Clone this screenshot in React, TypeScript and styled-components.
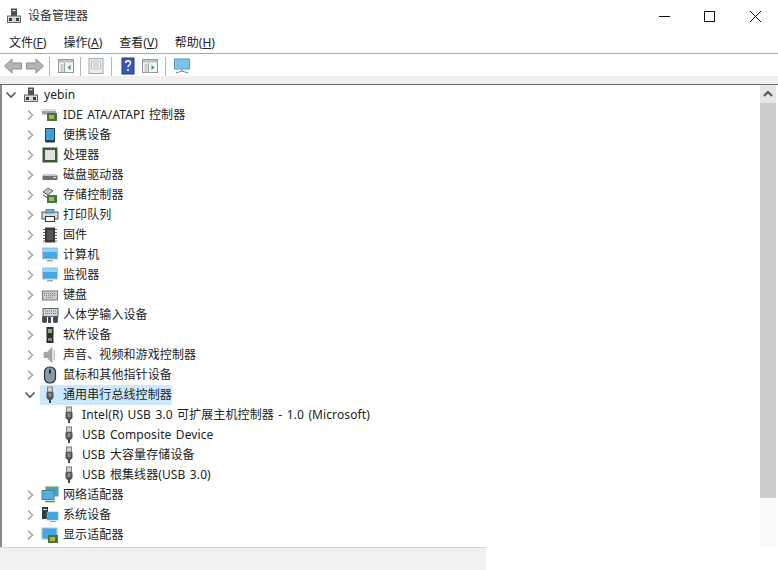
import React from 'react';
import styled, { createGlobalStyle } from 'styled-components';

const Global = createGlobalStyle`
  html, body { margin: 0; padding: 0; background: #fff; }
  body { font-family: "Noto Sans", "Noto Sans CJK SC", sans-serif; font-size: 12px; color: #222; overflow: hidden; }
`;

const Window = styled.div`
  width: 778px;
  height: 570px;
  display: flex;
  flex-direction: column;
  overflow: hidden;
  background: #fff;
`;
const TitleBar = styled.div`
  height: 32px;
  display: flex;
  align-items: center;
  padding-left: 5px;
  flex: none;
`;
const TitleIcon = styled.div`
  width: 18px;
  height: 18px;
  margin-right: 5px;
`;
const TitleText = styled.span`
  flex: 1;
  font-size: 12px;
  color: #333;
  margin-bottom: 2px;
`;
const WinButton = styled.div`
  width: 45.5px;
  height: 28px;
  display: flex;
  align-items: center;
  justify-content: center;
`;
const MenuBar = styled.div`
  height: 21px;
  display: flex;
  align-items: center;
  gap: 17px;
  padding-left: 9px;
  border-bottom: 1px solid #a8a8a8;
  flex: none;
`;
const MenuItem = styled.span`
  font-size: 12px;
  color: #222;
  margin-bottom: 2px;
  u { text-underline-offset: 1px; }
`;
const ToolBar = styled.div`
  height: 22px;
  box-sizing: border-box;
  padding: 2px 0 0 3px;
  display: flex;
  align-items: center;
  flex: none;
`;
const ToolIcon = styled.div<{ $w: number }>`
  width: ${p => p.$w}px;
  height: 18px;
  display: flex;
  align-items: center;
  justify-content: center;
`;
const ToolSep = styled.div<{ $l: number }>`
  width: 1px;
  height: 19px;
  background: #b5b5b5;
  margin: 0 6px 0 ${p => p.$l}px;
`;
const Band = styled.div`
  height: 8px;
  background: #efefef;
  border-bottom: 1px solid #6a6a6a;
  flex: none;
`;
const Body = styled.div`
  flex: 1;
  min-height: 0;
  display: flex;
  border-left: 2px solid #8a8a8a;
  padding-right: 2px;
`;
const Tree = styled.div`
  flex: 1;
  overflow: hidden;
`;
const Row = styled.div<{ $level: number }>`
  height: 20px;
  display: flex;
  align-items: center;
  padding-left: ${p => 3 + p.$level * 19}px;
`;
const Chevron = styled.div`
  width: 12px;
  height: 12px;
  flex: none;
  display: flex;
  align-items: center;
  justify-content: center;
`;
const Label = styled.div<{ $selected?: boolean }>`
  display: flex;
  align-items: center;
  height: 20px;
  margin-left: 4px;
  padding: 0 0 0 1px;
  background: ${p => (p.$selected ? '#cce8ff' : 'transparent')};
`;
const IconBox = styled.div`
  width: 18px;
  height: 18px;
  flex: none;
  margin-right: 4px;
  display: flex;
  align-items: center;
  justify-content: center;
`;
const RowText = styled.span`
  font-size: 12px;
  letter-spacing: 0.1px;
  word-spacing: 1.2px;
  color: #222;
  white-space: nowrap;
  margin-bottom: 2px;
`;
const ScrollBar = styled.div`
  width: 16px;
  background: #fafafa;
  display: flex;
  flex-direction: column;
  flex: none;
`;
const ScrollUp = styled.div`
  height: 18px;
  background: #e6e6e6;
  display: flex;
  align-items: center;
  justify-content: center;
`;
const ScrollThumb = styled.div`
  height: 395px;
  background: #cdcdcd;
`;
const StatusBar = styled.div`
  height: 22px;
  width: 486px;
  flex: none;
  background: #f0f0f0;
  border-top: 1px solid #d4d4d4;
`;

const Arrow = ({ open }: { open?: boolean }) => (
  <svg width="12" height="12" viewBox="0 0 12 12">
    {open ? (
      <path d="M1.500 3.500l4.500 4.500 4.500-4.500" fill="none" stroke="#555" strokeWidth="1.600" />
    ) : (
      <path d="M4 1.500l4.500 4.500-4.500 4.500" fill="none" stroke="#a6a6a6" strokeWidth="1.600" />
    )}
  </svg>
);

const Svg = ({ children }: { children: React.ReactNode }) => (
  <svg width="18" height="18" viewBox="0 0 18 18">{children}</svg>
);

const Monitor = () => (
  <>
    <rect x="1.500" y="2" width="15" height="11" fill="#47a6e6" stroke="#b4c4d0" />
    <rect x="2" y="2.500" width="14" height="3.500" fill="#93d4f6" />
    <rect x="6" y="14" width="6" height="1.500" fill="#9aa8b2" />
  </>
);
const Board = ({ x = 6, y = 8 }: { x?: number; y?: number }) => (
  <>
    <rect x={x} y={y} width="10" height="8" fill="#3d7a3d" />
    <rect x={x + 2} y={y + 2} width="5" height="4" fill="#c9a94a" />
  </>
);

const icons: Record<string, React.ReactNode> = {
  pc: (
    <Svg>
      <rect x="6" y="1.500" width="6" height="7.500" fill="#4f4f4f" />
      <rect x="7.500" y="3" width="3" height="1.200" fill="#e0e0e0" />
      <rect x="2.500" y="9" width="13" height="6.500" fill="#d8d8d8" stroke="#666" />
      <rect x="4" y="11" width="3" height="3" fill="#3c3c3c" />
      <rect x="11" y="11" width="3" height="3" fill="#3c3c3c" />
    </Svg>
  ),
  ide: (
    <Svg>
      <rect x="1" y="3.500" width="14" height="5" fill="#a0a0a0" />
      <rect x="1" y="3.500" width="14" height="1.500" fill="#e4e4e4" />
      <Board x={6} y={7} />
    </Svg>
  ),
  portable: (
    <Svg>
      <rect x="4" y="2" width="10" height="14.500" rx="1" fill="#2a3b4a" />
      <rect x="5" y="3" width="8" height="11" fill="#3d9fe6" />
    </Svg>
  ),
  cpu: (
    <Svg>
      <rect x="1.500" y="1.500" width="15" height="15" fill="#3c5a38" />
      <rect x="4" y="4" width="10" height="10" fill="#dfe3da" />
    </Svg>
  ),
  disk: (
    <Svg>
      <rect x="1.500" y="9" width="15" height="5" rx="1" fill="#6f6f6f" />
      <rect x="2.500" y="8" width="13" height="2" fill="#c8c8c8" />
      <rect x="12" y="11" width="3" height="1" fill="#d8e8d8" />
    </Svg>
  ),
  storage: (
    <Svg>
      <path d="M2 6l5-4 5 3-5 4z" fill="#c4c4c4" stroke="#444" strokeWidth="0.800" />
      <path d="M2 9l5 3" stroke="#444" />
      <Board x={6} y={9} />
    </Svg>
  ),
  printer: (
    <Svg>
      <rect x="1" y="6" width="16" height="7" fill="#d8d8d8" stroke="#555" />
      <rect x="5" y="3.500" width="8" height="3.500" fill="#5aaee6" stroke="#555" strokeWidth="0.600" />
      <rect x="4.500" y="10.500" width="9" height="5" fill="#fff" stroke="#333" />
    </Svg>
  ),
  firmware: (
    <Svg>
      <rect x="4" y="1.500" width="10" height="15" fill="#3a3a3a" />
      <path d="M2 3.500h2M2 6.500h2M2 9.500h2M2 12.500h2M2 15h2M14 3.500h2M14 6.500h2M14 9.500h2M14 12.500h2M14 15h2" stroke="#666" />
      <rect x="6" y="4" width="6" height="10" fill="#555" />
    </Svg>
  ),
  monitor: <Svg><Monitor /></Svg>,
  keyboard: (
    <Svg>
      <rect x="1.500" y="5" width="15" height="9" fill="#c9ccd0" stroke="#777" />
      <path d="M3 7.500h12M3 9.500h12M5 11.500h8" stroke="#7f848a" strokeDasharray="1 1" />
    </Svg>
  ),
  hid: (
    <Svg>
      <rect x="2" y="2.500" width="15" height="8" fill="#d0d3d6" stroke="#666" />
      <path d="M4 5h11M4 7.500h11" stroke="#777" strokeDasharray="1 1" />
      <rect x="1" y="10" width="5" height="7" rx="2" fill="#3f4a5a" />
      <rect x="7" y="11" width="3" height="6" fill="#3f4a5a" />
      <rect x="12" y="10" width="5" height="7" rx="2" fill="#3f4a5a" />
    </Svg>
  ),
  software: (
    <Svg>
      <rect x="5.500" y="1" width="7" height="16" fill="#26342c" />
      <rect x="7" y="3" width="4" height="4" fill="#7fb08a" />
      <rect x="7" y="12" width="4" height="3" fill="#888" />
    </Svg>
  ),
  sound: (
    <Svg>
      <path d="M3 6.500h3l5-5v15l-5-5H3z" fill="#a8a8a8" stroke="#8c8c8c" strokeWidth="0.600" />
      <rect x="12.500" y="4" width="1.500" height="10" fill="#c4c4c4" />
    </Svg>
  ),
  mouse: (
    <Svg>
      <rect x="3.500" y="1" width="11" height="16" rx="5" fill="#8a97a6" stroke="#26303a" strokeWidth="1.200" />
      <rect x="8" y="3.500" width="2" height="4" fill="#26303a" />
    </Svg>
  ),
  usb: (
    <Svg>
      <rect x="6.500" y="1" width="5" height="5" fill="#d0d0d0" stroke="#808080" />
      <path d="M5.500 7a1 1 0 0 1 1-1h5a1 1 0 0 1 1 1v5l-2 2H7.500l-2-2z" fill="#555" />
      <rect x="7.500" y="7" width="3" height="4" fill="#8a8a8a" />
      <rect x="8" y="14" width="2" height="3" fill="#444" />
    </Svg>
  ),
  network: (
    <Svg>
      <rect x="5" y="1" width="12" height="9" fill="#3fa0e0" stroke="#6f9a70" />
      <rect x="1" y="4.500" width="12" height="9" fill="#50b0ea" stroke="#4f8a5f" />
      <path d="M4 15.500h10" stroke="#4f9a4f" strokeWidth="1.600" />
    </Svg>
  ),
  system: (
    <Svg>
      <rect x="1" y="1" width="6" height="12" fill="#2f3a40" />
      <rect x="2" y="3" width="4" height="1" fill="#ddd" />
      <rect x="6" y="6" width="11" height="8" fill="#3fa6e6" stroke="#8ab" strokeWidth="0.600" />
      <rect x="9" y="15" width="6" height="1" fill="#8ab" />
    </Svg>
  ),
  display: (
    <Svg>
      <rect x="1" y="2" width="15" height="11" fill="#47a6e6" stroke="#b4c4d0" />
      <Board x={7} y={9} />
    </Svg>
  ),
};

const nodes = [
  { text: 'yebin', icon: 'pc', level: 0, open: true },
  { text: 'IDE ATA/ATAPI 控制器', icon: 'ide', level: 1 },
  { text: '便携设备', icon: 'portable', level: 1 },
  { text: '处理器', icon: 'cpu', level: 1 },
  { text: '磁盘驱动器', icon: 'disk', level: 1 },
  { text: '存储控制器', icon: 'storage', level: 1 },
  { text: '打印队列', icon: 'printer', level: 1 },
  { text: '固件', icon: 'firmware', level: 1 },
  { text: '计算机', icon: 'monitor', level: 1 },
  { text: '监视器', icon: 'monitor', level: 1 },
  { text: '键盘', icon: 'keyboard', level: 1 },
  { text: '人体学输入设备', icon: 'hid', level: 1 },
  { text: '软件设备', icon: 'software', level: 1 },
  { text: '声音、视频和游戏控制器', icon: 'sound', level: 1 },
  { text: '鼠标和其他指针设备', icon: 'mouse', level: 1 },
  { text: '通用串行总线控制器', icon: 'usb', level: 1, open: true, selected: true },
  { text: 'Intel(R) USB 3.0 可扩展主机控制器 - 1.0 (Microsoft)', icon: 'usb', level: 2, leaf: true },
  { text: 'USB Composite Device', icon: 'usb', level: 2, leaf: true },
  { text: 'USB 大容量存储设备', icon: 'usb', level: 2, leaf: true },
  { text: 'USB 根集线器(USB 3.0)', icon: 'usb', level: 2, leaf: true },
  { text: '网络适配器', icon: 'network', level: 1 },
  { text: '系统设备', icon: 'system', level: 1 },
  { text: '显示适配器', icon: 'display', level: 1 },
];

const menus = [
  ['文件(', 'F', ')'],
  ['操作(', 'A', ')'],
  ['查看(', 'V', ')'],
  ['帮助(', 'H', ')'],
];

const PanelIcon = ({ arrow }: { arrow: string }) => (
  <Svg>
    <rect x="1.500" y="2.500" width="15" height="13" fill="#f4f4f4" stroke="#8f9a9f" />
    <rect x="2" y="3" width="14" height="2.500" fill="#b8c4c8" />
    <path d="M3.500 8h3M3.500 10h3M3.500 12h3M3.500 14h3" stroke="#9aa4a8" />
    <path d="M7.500 6v9" stroke="#9aa4a8" />
    <path d={arrow} fill="#3c9a4c" />
  </Svg>
);

export default function App() {
  return (
    <Window>
      <Global />
      <TitleBar>
        <TitleIcon>{icons.pc}</TitleIcon>
        <TitleText>设备管理器</TitleText>
        <WinButton>
          <svg width="11" height="11" viewBox="0 0 11 11"><path d="M0 5.500h11" stroke="#111" /></svg>
        </WinButton>
        <WinButton>
          <svg width="11" height="11" viewBox="0 0 11 11"><rect x="0.500" y="0.500" width="10" height="10" fill="none" stroke="#111" /></svg>
        </WinButton>
        <WinButton>
          <svg width="11" height="11" viewBox="0 0 11 11"><path d="M0 0l11 11M11 0L0 11" stroke="#111" /></svg>
        </WinButton>
      </TitleBar>
      <MenuBar>
        {menus.map(m => (
          <MenuItem key={m[1]}>{m[0]}<u>{m[1]}</u>{m[2]}</MenuItem>
        ))}
      </MenuBar>
      <ToolBar>
        <ToolIcon $w={19}><Svg><path d="M0.500 9l7.500-7v4h9.500v6H8v4z" fill="#b4b4b4" stroke="#8a8a8a" /></Svg></ToolIcon>
        <ToolIcon $w={25}><Svg><path d="M17.500 9l-7.500-7v4H0.500v6H10v4z" fill="#b4b4b4" stroke="#8a8a8a" /></Svg></ToolIcon>
        <ToolSep $l={2} />
        <ToolIcon $w={20}><PanelIcon arrow="M13.500 8l-3 2.500 3 2.500z" /></ToolIcon>
        <ToolSep $l={4} />
        <ToolIcon $w={18}>
          <Svg>
            <rect x="2" y="1.500" width="14" height="15" fill="#eef0f0" stroke="#a0a8ac" />
            <rect x="4.500" y="4" width="9" height="8" fill="#fff" stroke="#b4bcc0" />
            <path d="M6 6h6M6 8h6M6 10h6" stroke="#a8b8c4" />
          </Svg>
        </ToolIcon>
        <ToolSep $l={6} />
        <ToolIcon $w={20}>
          <Svg>
            <rect x="3" y="1" width="12" height="16" fill="#3a57b8" stroke="#24347c" />
            <path d="M6.800 6c0-3 4.700-3 4.700 0 0 2-2.500 2-2.500 4.200M9 12v2" fill="none" stroke="#fff" strokeWidth="1.500" />
          </Svg>
        </ToolIcon>
        <ToolIcon $w={24}><PanelIcon arrow="M10.500 8l3 2.500-3 2.500z" /></ToolIcon>
        <ToolSep $l={3} />
        <ToolIcon $w={20}>
          <Svg>
            <rect x="1.500" y="2" width="15" height="10" fill="#7cc3ec" stroke="#5a9cc4" />
            <path d="M9 12v2M3 16l6-2 6 2" fill="none" stroke="#5a9090" />
          </Svg>
        </ToolIcon>
      </ToolBar>
      <Band />
      <Body>
        <Tree>
          {nodes.map(n => (
            <Row key={n.text} $level={n.level}>
              <Chevron>{!n.leaf && <Arrow open={n.open} />}</Chevron>
              <Label $selected={n.selected}>
                <IconBox>{icons[n.icon]}</IconBox>
                <RowText>{n.text}</RowText>
              </Label>
            </Row>
          ))}
        </Tree>
        <ScrollBar>
          <ScrollUp>
            <svg width="10" height="8" viewBox="0 0 10 8"><path d="M1 6l4-4 4 4" fill="none" stroke="#555" strokeWidth="2" /></svg>
          </ScrollUp>
          <ScrollThumb />
        </ScrollBar>
      </Body>
      <StatusBar />
    </Window>
  );
}
